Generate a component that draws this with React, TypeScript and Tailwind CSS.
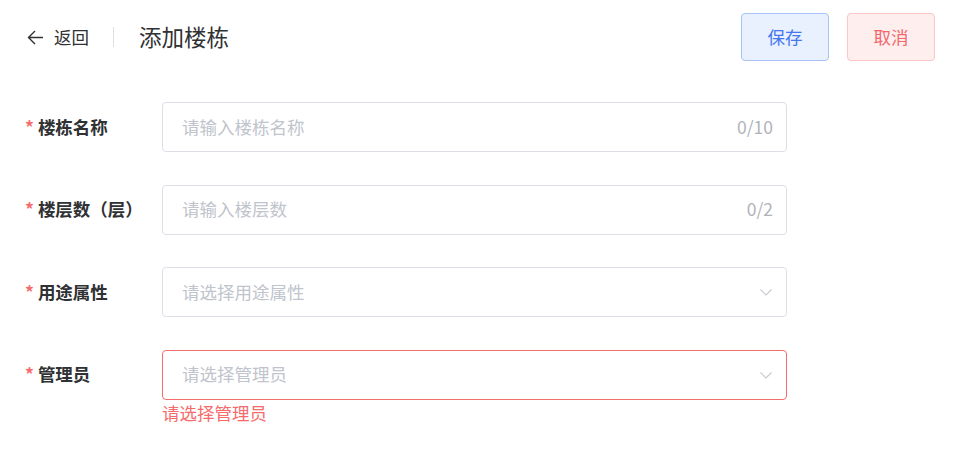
import React from "react";

const font = { fontFamily: '"Noto Sans CJK SC", "Noto Sans", sans-serif' };

function Chevron() {
  return (
    <svg width="14" height="14" viewBox="0 0 14 14" fill="none" className="text-[#c8cbd2]">
      <path d="M1.5 4.5 L7 10 L12.5 4.5" stroke="currentColor" strokeWidth="1.2" />
    </svg>
  );
}

function Row({
  label,
  placeholder,
  count,
  select,
  error,
}: {
  label: string;
  placeholder: string;
  count?: string;
  select?: boolean;
  error?: string;
}) {
  return (
    <div className="flex items-start">
      <div className="w-[162px] h-[50px] pl-[25px] flex items-center text-[17.5px] font-bold text-[#303133]">
        <span className="text-[#f56c6c] mr-[4px] font-bold">*</span>
        {label}
      </div>
      <div className="flex flex-col">
        <div
          className={`w-[625px] h-[50px] rounded-[4px] border flex items-center pl-[19px] pr-[13px] ${
            error ? "border-[#f56c6c]" : "border-[#dcdfe6]"
          }`}
        >
          <span className="flex-1 text-[17.5px] text-[#c0c4cc]">{placeholder}</span>
          {count && <span className="text-[17.5px] text-[#b0b3b9]">{count}</span>}
          {select && <Chevron />}
        </div>
        {error && <div className="text-[17.5px] text-[#f56c6c] leading-[22px] mt-[2px]">{error}</div>}
      </div>
    </div>
  );
}

export default function App() {
  return (
    <div className="w-[963px] h-[467px] bg-white" style={font}>
      <div className="flex items-center justify-between pt-[13px] pr-[28px]">
        <div className="flex items-center h-[48px]">
          <div className="flex items-center pl-[26px] text-[#303133]">
            <svg width="19" height="19" viewBox="0 0 19 19" fill="none">
              <path d="M17 9.5 H2.5 M9 3 L2.5 9.5 L9 16" stroke="#303133" strokeWidth="1.4" />
            </svg>
            <span className="ml-[9px] text-[17.5px] text-[#303133]">返回</span>
          </div>
          <div className="w-[1px] h-[20px] bg-[#dcdfe6] ml-[24px]" />
          <span className="ml-[25px] text-[22.5px] text-[#303133]">添加楼栋</span>
        </div>
        <div className="flex gap-[18px]">
          <button className="w-[88px] h-[48px] rounded-[4px] border border-[#a8c4fb] bg-[#e9f0fe] text-[#4577f0] text-[17.5px]">
            保存
          </button>
          <button className="w-[88px] h-[48px] rounded-[4px] border border-[#fbc6c6] bg-[#feeeee] text-[#f2676a] text-[17.5px]">
            取消
          </button>
        </div>
      </div>
      <div className="flex flex-col gap-[32.5px] mt-[41px]">
        <Row label="楼栋名称" placeholder="请输入楼栋名称" count="0/10" />
        <Row label="楼层数（层）" placeholder="请输入楼层数" count="0/2" />
        <Row label="用途属性" placeholder="请选择用途属性" select />
        <Row label="管理员" placeholder="请选择管理员" select error="请选择管理员" />
      </div>
    </div>
  );
}
